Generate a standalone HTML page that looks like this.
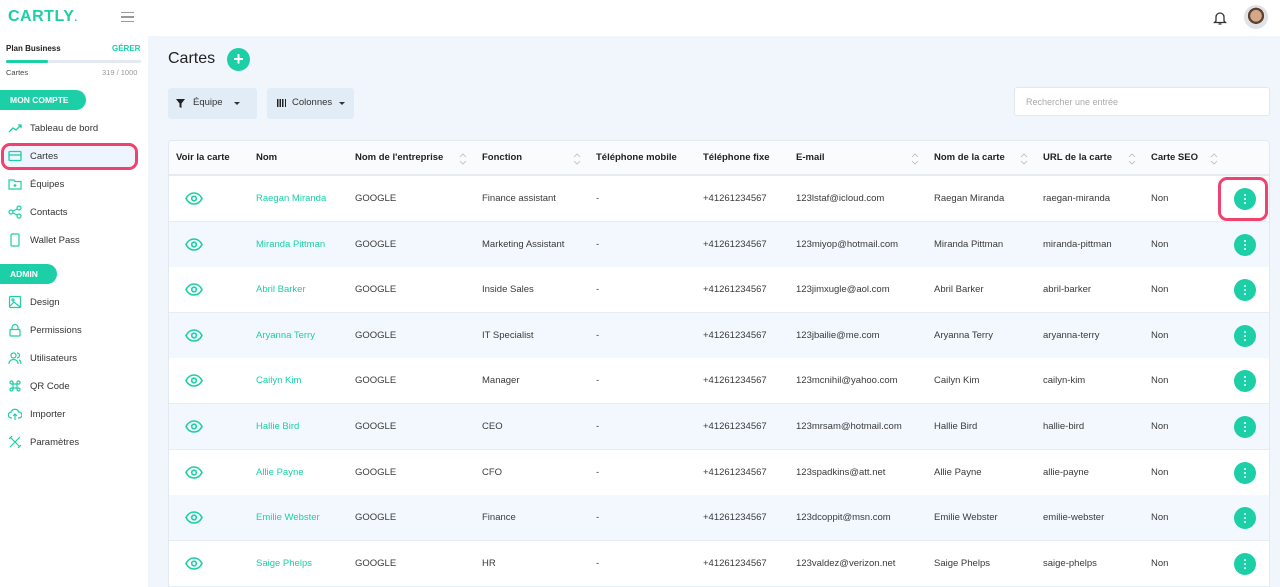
<!DOCTYPE html>
<html style="width:1280px;height:587px;overflow:hidden"><head><meta charset="utf-8"><style>
*{box-sizing:border-box;margin:0;padding:0}
body{width:1280px;height:587px;overflow:hidden;font-family:"Liberation Sans",sans-serif;background:#f1f6fd;position:relative;color:#333;font-size:10px}
.side{position:absolute;left:0;top:0;width:148px;height:587px;background:#fff}
.top{position:absolute;left:148px;top:0;width:1132px;height:36px;background:#fff}
.abs{position:absolute}
.nav{position:absolute;left:30px;font-size:9.5px;color:#333}
.ico{position:absolute;left:8px;width:14px;height:14px}
.pill{position:absolute;left:0;height:20px;background:#1ccfa6;color:#fff;font-weight:bold;font-size:8.5px;line-height:20px;padding-left:10px;border-radius:0 10px 10px 0}
.tbl{position:absolute;left:168px;top:140px;width:1102px;height:460px;background:#fff;border:1px solid #e4e9ef;border-radius:4px;overflow:hidden}
.hd{position:absolute;top:0;left:0;width:100%;height:35px;background:#fafbfc;border-bottom:2px solid #e6ebf1}
.th{position:absolute;top:11px;font-weight:bold;font-size:9.5px;color:#222}
.row{position:absolute;left:0;width:100%;height:46px;border-bottom:1px solid #e8edf2}
.td{position:absolute;top:17px;font-size:9.5px;color:#3a3a3a;white-space:nowrap}
.srt{position:absolute;top:11px;width:8px;height:14px}
.btn{position:absolute;left:1065px;top:12px;width:22px;height:22px;border-radius:50%;background:#1ccfa6}
.btn i{position:absolute;left:10px;width:2px;height:2px;background:#fff;border-radius:1px}
</style></head><body>
<div class="side">
<div class="abs" style="left:8px;top:8px;font-size:16px;font-weight:bold;color:#1ccfa6;letter-spacing:0.5px">CARTLY<span style="font-size:10px">.</span></div>
<div class="abs" style="left:121px;top:12px;width:13px;height:10px;border-top:1.5px solid #999;border-bottom:1.5px solid #999"><div style="margin-top:3px;height:1.5px;background:#999"></div></div>
<div class="abs" style="left:6px;top:44px;font-size:8px;font-weight:bold;color:#222">Plan Business</div>
<div class="abs" style="left:112px;top:44px;font-size:8px;font-weight:bold;color:#1ccfa6">GÉRER</div>
<div class="abs" style="left:6px;top:60px;width:135px;height:3px;background:#e3e9f0;border-radius:2px"><div style="width:42px;height:3px;background:#1ccfa6;border-radius:2px"></div></div>
<div class="abs" style="left:6px;top:68px;font-size:7.5px;color:#444">Cartes</div>
<div class="abs" style="left:102px;top:68px;font-size:7.5px;color:#999">319 / 1000</div>
<div class="pill" style="top:90px;width:86px">MON COMPTE</div>
<div class="abs" style="left:1px;top:143px;width:137px;height:27px;border:3px solid #f0426e;border-radius:9px;background:#eef5fe"></div>
<svg class="ico" style="top:121px" viewBox="0 0 14 14" fill="none" stroke="#1ccfa6" stroke-width="1.3"><path d="M1 11l4-4 3 2 5-5M10 4h3v3"/></svg>
<div class="nav" style="top:123px">Tableau de bord</div>
<svg class="ico" style="top:149px" viewBox="0 0 14 14" fill="none" stroke="#1ccfa6" stroke-width="1.3"><rect x="1" y="2.5" width="12" height="9" rx="1"/><path d="M1 6h12"/></svg>
<div class="nav" style="top:151px">Cartes</div>
<svg class="ico" style="top:177px" viewBox="0 0 14 14" fill="none" stroke="#1ccfa6" stroke-width="1.2"><path d="M1 3h5l1 1.5h6V12H1z"/><path d="M7 7v3M5.5 8.5h3"/></svg>
<div class="nav" style="top:179px">Équipes</div>
<svg class="ico" style="top:205px" viewBox="0 0 14 14" fill="none" stroke="#1ccfa6" stroke-width="1.2"><circle cx="3" cy="7" r="2"/><circle cx="11" cy="3" r="2"/><circle cx="11" cy="11" r="2"/><path d="M5 6l4-2M5 8l4 2"/></svg>
<div class="nav" style="top:207px">Contacts</div>
<svg class="ico" style="top:233px" viewBox="0 0 14 14" fill="none" stroke="#1ccfa6" stroke-width="1.2"><rect x="3" y="1" width="8" height="12" rx="1"/></svg>
<div class="nav" style="top:235px">Wallet Pass</div>
<div class="pill" style="top:264px;width:57px">ADMIN</div>
<svg class="ico" style="top:295px" viewBox="0 0 14 14" fill="none" stroke="#1ccfa6" stroke-width="1.2"><rect x="1.5" y="1.5" width="11" height="11" rx="1"/><path d="M2 11l4-4 6 5"/><circle cx="5" cy="5" r="1"/></svg>
<div class="nav" style="top:297px">Design</div>
<svg class="ico" style="top:323px" viewBox="0 0 14 14" fill="none" stroke="#1ccfa6" stroke-width="1.2"><rect x="2" y="6.5" width="10" height="6.5" rx="1"/><path d="M4 6.5V4.5a3 3 0 016 0v2"/></svg>
<div class="nav" style="top:325px">Permissions</div>
<svg class="ico" style="top:351px" viewBox="0 0 14 14" fill="none" stroke="#1ccfa6" stroke-width="1.2"><circle cx="5.5" cy="4.5" r="2.5"/><path d="M1 13c0-3 2-4.5 4.5-4.5S10 10 10 13M9 2a2.5 2.5 0 010 5M11 9c1.5.5 2 2 2 4"/></svg>
<div class="nav" style="top:353px">Utilisateurs</div>
<svg class="ico" style="top:379px" viewBox="0 0 14 14" fill="none" stroke="#1ccfa6" stroke-width="1.2"><path d="M5 5h4v4H5zM5 5H3.5A1.5 1.5 0 115 3.5zM9 5V3.5A1.5 1.5 0 1110.5 5zM9 9h1.5A1.5 1.5 0 119 10.5zM5 9v1.5A1.5 1.5 0 113.5 9z"/></svg>
<div class="nav" style="top:381px">QR Code</div>
<svg class="ico" style="top:407px" viewBox="0 0 14 14" fill="none" stroke="#1ccfa6" stroke-width="1.2"><path d="M4 11H3.5a3 3 0 01-.3-6 4 4 0 017.6 0 3 3 0 01.2 6H10M7 13V7M5 9l2-2 2 2"/></svg>
<div class="nav" style="top:409px">Importer</div>
<svg class="ico" style="top:435px" viewBox="0 0 14 14" fill="none" stroke="#1ccfa6" stroke-width="1.2"><path d="M2 2l10 10M12 2L2 12M1 4l3-3M10 13l3-3"/></svg>
<div class="nav" style="top:437px">Paramètres</div>
</div>
<div class="top"></div>
<svg class="abs" style="left:1213px;top:10px" width="14" height="16" viewBox="0 0 14 16" fill="none" stroke="#333" stroke-width="1.3"><path d="M3 11V7a4 4 0 018 0v4l1.5 1.5h-11zM5.5 14h3"/></svg>
<div class="abs" style="left:1244px;top:5px;width:24px;height:24px;border-radius:50%;background:radial-gradient(circle at 50% 45%,#d4a888 0 32%,#5e4232 33% 45%,#dfe3e6 46%)"></div>
<div class="abs" style="left:168px;top:50px;font-size:16px;color:#222">Cartes</div>
<div class="abs" style="left:227px;top:48px;width:23px;height:23px;border-radius:50%;background:#1ccfa6;color:#fff;font-size:18px;line-height:22px;text-align:center;font-weight:bold">+</div>
<div class="abs" style="left:168px;top:88px;width:89px;height:31px;background:#e2ecf7;border-radius:3px"></div>
<svg class="abs" style="left:176px;top:99px" width="9" height="9" viewBox="0 0 9 9"><path d="M0 0h9L5.5 4.5V9L3.5 8V4.5z" fill="#222"/></svg>
<div class="abs" style="left:193px;top:97px;font-size:9.5px;color:#333">Équipe</div>
<div class="abs" style="left:234px;top:102px;border:3px solid transparent;border-top:3px solid #333"></div>
<div class="abs" style="left:267px;top:88px;width:87px;height:31px;background:#e2ecf7;border-radius:3px"></div>
<div class="abs" style="left:277px;top:99px;width:9px;height:8px;background:repeating-linear-gradient(90deg,#222 0 1.5px,transparent 1.5px 2.6px)"></div>
<div class="abs" style="left:292px;top:97px;font-size:9.5px;color:#333">Colonnes</div>
<div class="abs" style="left:339px;top:102px;border:3px solid transparent;border-top:3px solid #333"></div>
<div class="abs" style="left:1014px;top:87px;width:256px;height:29px;background:#fff;border:1px solid #e3e8ee;border-radius:3px;padding:9px 11px;font-size:9px;color:#aaa">Rechercher une entrée</div>
<div class="tbl">
<div class="hd">
<div class="th" style="left:7px">Voir la carte</div><div class="th" style="left:87px">Nom</div><div class="th" style="left:186px">Nom de l'entreprise</div><div class="th" style="left:313px">Fonction</div><div class="th" style="left:427px">Téléphone mobile</div><div class="th" style="left:534px">Téléphone fixe</div><div class="th" style="left:627px">E-mail</div><div class="th" style="left:765px">Nom de la carte</div><div class="th" style="left:874px">URL de la carte</div><div class="th" style="left:982px">Carte SEO</div>
<svg class="srt" style="left:290px" viewBox="0 0 8 14" fill="none" stroke="#bbb" stroke-width="0.8"><path d="M1 5l3-3 3 3M1 9l3 3 3-3"/></svg>
<svg class="srt" style="left:404px" viewBox="0 0 8 14" fill="none" stroke="#bbb" stroke-width="0.8"><path d="M1 5l3-3 3 3M1 9l3 3 3-3"/></svg>
<svg class="srt" style="left:742px" viewBox="0 0 8 14" fill="none" stroke="#bbb" stroke-width="0.8"><path d="M1 5l3-3 3 3M1 9l3 3 3-3"/></svg>
<svg class="srt" style="left:851px" viewBox="0 0 8 14" fill="none" stroke="#bbb" stroke-width="0.8"><path d="M1 5l3-3 3 3M1 9l3 3 3-3"/></svg>
<svg class="srt" style="left:959px" viewBox="0 0 8 14" fill="none" stroke="#bbb" stroke-width="0.8"><path d="M1 5l3-3 3 3M1 9l3 3 3-3"/></svg>
<svg class="srt" style="left:1041px" viewBox="0 0 8 14" fill="none" stroke="#bbb" stroke-width="0.8"><path d="M1 5l3-3 3 3M1 9l3 3 3-3"/></svg>
</div>
<div id="rows"></div>
</div>
<div class="abs" style="left:1218px;top:177px;width:50px;height:44px;border:3px solid #f0426e;border-radius:9px"></div>
<script>
var d=[["Raegan Miranda","Finance assistant","123lstaf@icloud.com","raegan-miranda"],["Miranda Pittman","Marketing Assistant","123miyop@hotmail.com","miranda-pittman"],["Abril Barker","Inside Sales","123jimxugle@aol.com","abril-barker"],["Aryanna Terry","IT Specialist","123jbailie@me.com","aryanna-terry"],["Cailyn Kim","Manager","123mcnihil@yahoo.com","cailyn-kim"],["Hallie Bird","CEO","123mrsam@hotmail.com","hallie-bird"],["Allie Payne","CFO","123spadkins@att.net","allie-payne"],["Emilie Webster","Finance","123dcoppit@msn.com","emilie-webster"],["Saige Phelps","HR","123valdez@verizon.net","saige-phelps"]];
var h="";d.forEach(function(r,i){var t=35+i*45.6;h+='<div class="row" style="top:'+t+'px;background:'+(i%2?'#f3f8fe':'#fff')+'">'+
'<svg class="abs" style="left:16px;top:16px" width="18" height="13" viewBox="0 0 18 13" fill="none" stroke="#1ccfa6" stroke-width="1.6"><path d="M1 6.5C3 2.5 6 1 9 1s6 1.5 8 5.5C15 10.5 12 12 9 12S3 10.5 1 6.5z"/><circle cx="9" cy="6.5" r="2.3"/></svg>'+
'<div class="td" style="left:87px;color:#1ccfa6">'+r[0]+'</div><div class="td" style="left:186px">GOOGLE</div><div class="td" style="left:313px">'+r[1]+'</div><div class="td" style="left:427px">-</div><div class="td" style="left:534px">+41261234567</div><div class="td" style="left:627px">'+r[2]+'</div><div class="td" style="left:765px">'+r[0]+'</div><div class="td" style="left:874px">'+r[3]+'</div><div class="td" style="left:982px">Non</div>'+
'<div class="btn"><i style="top:6px"></i><i style="top:10px"></i><i style="top:14px"></i></div></div>';});
document.getElementById("rows").innerHTML=h;
</script>
</body></html>
